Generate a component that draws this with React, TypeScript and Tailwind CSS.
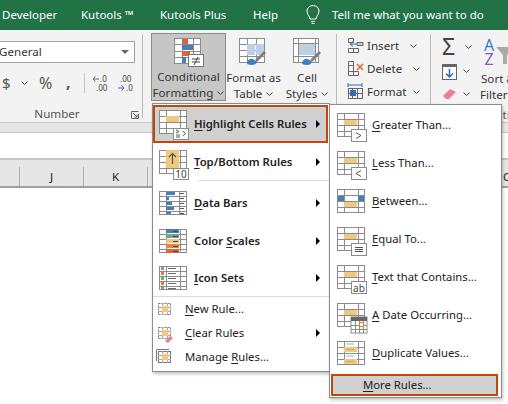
import type { ReactNode } from 'react';

const GRAY = '#8c8c8c';
const AMBER = '#f0c97f';
const BLUE = '#4a7fb5';
const RED = '#e0623f';

function Grid({ x = 1, y = 1, w = 28, h = 24, cols = [7, 21], rows = [6, 12, 18] }: { x?: number; y?: number; w?: number; h?: number; cols?: number[]; rows?: number[] }) {
  return (
    <g stroke={GRAY} fill="none" strokeWidth="1">
      <rect x={x + 0.5} y={y + 0.5} width={w - 1} height={h - 1} fill="#fff" />
      {cols.map((c) => <path key={c} d={`M${x + c + 0.5} ${y}v${h}`} />)}
      {rows.map((r) => <path key={r} d={`M${x} ${y + r + 0.5}h${w}`} />)}
    </g>
  );
}

function Badge({ children, x = 15, y = 17, w = 16, h = 13 }: { children?: ReactNode; x?: number; y?: number; w?: number; h?: number }) {
  return (
    <g>
      <rect x={x + 0.5} y={y + 0.5} width={w - 1} height={h - 1} fill="#fff" stroke={GRAY} />
      {children}
    </g>
  );
}

function Icon({ children, size = 32 }: { children: ReactNode; size?: number }) {
  return <svg width={size} height={size} viewBox={`0 0 ${size} ${size}`} className="block shrink-0">{children}</svg>;
}

const AmberCell = ({ y = 8, h = 5 }: { y?: number; h?: number }) => <rect x="8" y={y} width="13" height={h} fill={AMBER} />;

const icons: Record<string, ReactNode> = {
  highlight: (
    <Icon><Grid /><AmberCell y={7} h={6} /><Badge y={19} h={12}><path d="M18 21l3 1.500-3 1.500M18 26h4M18 28h4M24.500 22l3 2.500-3 2.500" stroke="#555" fill="none" /></Badge></Icon>
  ),
  top: (
    <Icon><Grid /><rect x="8" y="1" width="13" height="18" fill={AMBER} /><path d="M14.500 15V5M11 8l3.500-3.500L18 8" stroke="#555" fill="none" strokeWidth="1.200" /><Badge y={19} h={12}><text x="23" y="29" textAnchor="middle" fontSize="10" fill="#444" fontFamily="Noto Sans">10</text></Badge></Icon>
  ),
  bars: (
    <Icon>
      <Grid cols={[7, 20]} rows={[5, 10, 15, 20]} />
      <rect x="8" y="2" width="9" height="3" fill={BLUE} /><rect x="8" y="7" width="3" height="3" fill={BLUE} /><rect x="8" y="12" width="6" height="3" fill={BLUE} /><rect x="8" y="17" width="8" height="3" fill={BLUE} /><rect x="8" y="22" width="5" height="2" fill={BLUE} />
      <path d="M22 3.500h4M22 8.500h4M22 13.500h4M22 18.500h4M22 23.500h4" stroke="#555" />
    </Icon>
  ),
  scales: (
    <Icon>
      <Grid cols={[7, 21]} rows={[5, 10, 15, 20]} />
      <rect x="8" y="1" width="13" height="4" fill={BLUE} /><rect x="8" y="6" width="13" height="4" fill="#6fa58d" /><rect x="8" y="11" width="13" height="4" fill={AMBER} /><rect x="8" y="16" width="13" height="4" fill="#e8863f" /><rect x="8" y="21" width="13" height="4" fill={RED} />
      <path d="M15 3.500h5M15 8.500h5M15 13.500h5M15 18.500h5M15 23.500h5" stroke="#444" />
    </Icon>
  ),
  sets: (
    <Icon>
      <Grid cols={[7, 21]} rows={[5, 10, 15, 20]} />
      <rect x="3" y="2" width="3" height="3" fill="#6fa58d" /><rect x="3" y="7" width="3" height="3" fill="#ea7d2c" /><rect x="3" y="12" width="3" height="3" fill="#6fa58d" /><rect x="3" y="17" width="3" height="3" fill="#ea7d2c" /><rect x="3" y="22" width="3" height="2" fill="#6fa58d" />
      <path d="M10 3.500h8M10 8.500h8M10 13.500h8M10 18.500h8M10 23.500h8" stroke="#666" />
    </Icon>
  ),
  greater: (
    <Icon><Grid /><AmberCell /><Badge><path d="M20 20.500l5 3-5 3" stroke="#555" fill="none" /></Badge></Icon>
  ),
  less: (
    <Icon><Grid /><AmberCell /><Badge><path d="M25 20.500l-5 3 5 3" stroke="#555" fill="none" /></Badge></Icon>
  ),
  between: (
    <Icon><Grid /><rect x="2" y="8" width="6" height="5" fill={BLUE} /><rect x="22" y="8" width="6" height="5" fill={BLUE} /><rect x="8" y="14" width="13" height="5" fill={AMBER} /></Icon>
  ),
  equal: (
    <Icon><Grid /><AmberCell /><Badge><path d="M19 21.500h8M19 23.500h8M19 25.500h8" stroke="#555" /></Badge></Icon>
  ),
  text: (
    <Icon><Grid /><AmberCell /><Badge><text x="23" y="28" textAnchor="middle" fontSize="10" fill="#444" fontFamily="Noto Sans">ab</text></Badge></Icon>
  ),
  date: (
    <Icon>
      <Grid /><AmberCell />
      <rect x="15" y="15" width="16" height="16" fill="#fff" stroke={GRAY} />
      <rect x="15" y="15" width="16" height="4" fill="#666" />
      <path d="M15 23.500h16M15 27.500h16M19.500 19v12M23.500 19v12M27.500 19v12" stroke={GRAY} />
      <rect x="23.500" y="20.500" width="4" height="4" fill="#fff" stroke="#e8792c" />
    </Icon>
  ),
  dup: (
    <Icon>
      <Grid cols={[7, 21]} />
      <path d="M10 4h8" stroke="#aaa" /><rect x="8" y="7" width="13" height="5" fill={AMBER} /><path d="M10 9.500h8" stroke="#aaa" /><path d="M10 16h8" stroke="#aaa" /><rect x="8" y="19" width="13" height="5" fill={AMBER} /><path d="M10 21.500h8" stroke="#aaa" />
    </Icon>
  ),
};

function SmallGrid({ kind }: { kind: 'new' | 'clear' | 'manage' }) {
  return (
    <svg width="18" height="18" viewBox="0 0 18 18" className="block shrink-0 mt-[1px]">
      {kind === 'manage' && <path d="M0.500 12V0.500H13" stroke="#777" fill="none" />}
      <rect x="2.500" y="2.500" width="12" height="11" fill="#fff" stroke="#777" strokeDasharray={kind === 'manage' ? undefined : '2 1'} />
      <path d="M2 6.500h13M2 10.500h13M6.500 2v12M11.500 2v12" stroke="#aaa" />
      <rect x="6" y="5" width="6" height="6" fill={AMBER} />
      {kind === 'clear' && <path d="M9 16l5-5 3 2-5 5z" fill="#ea7f92" />}
    </svg>
  );
}

function Arrow() {
  return <span className="ml-auto w-0 h-0 border-y-[4px] border-y-transparent border-l-[4px] border-l-black" />;
}

function Label({ pre = '', u, post, bold }: { pre?: string; u: string; post: string; bold?: boolean }) {
  return (
    <span className={`text-[11.3px] whitespace-nowrap text-[#222] ${bold ? 'font-semibold' : ''}`}>
      {pre}<span className="underline underline-offset-2">{u}</span>{post}
    </span>
  );
}

function MainRow({ icon, u, pre, post, active, short }: { icon: string; u: string; pre?: string; post: string; active?: boolean; short?: boolean }) {
  return (
    <div className={`flex items-center ${short ? 'h-[36px]' : 'h-[38px]'} ${active ? 'mr-[1px] pl-[3px] pr-[6px] bg-[#d0d0d0] border-2 border-[#c4470a]' : 'pl-[5px] pr-[9px]'}`}>
      <div className={`w-[36px] h-[32px] ${active ? 'pt-[1px]' : 'pt-[3px]'}`}>{icons[icon]}</div>
      <Label pre={pre} u={u} post={post} bold />
      <Arrow />
    </div>
  );
}

function SmallRow({ kind, u, pre, post, arrow }: { kind: 'new' | 'clear' | 'manage'; u: string; pre?: string; post: string; arrow?: boolean }) {
  return (
    <div className="h-[24px] flex items-center pl-[3px] pr-[9px]">
      <div className="w-[29px]"><SmallGrid kind={kind} /></div>
      <Label pre={pre} u={u} post={post} />
      {arrow && <Arrow />}
    </div>
  );
}

function SubRow({ icon, u, pre, post }: { icon: string; u: string; pre?: string; post: string }) {
  return (
    <div className="h-[38px] flex items-center pl-[6px]">
      <div className="w-[36px] h-[32px] -mt-[1px] pt-[3px]">{icons[icon]}</div>
      <Label pre={pre} u={u} post={post} />
    </div>
  );
}

function Chevron() {
  return (
    <svg width="7" height="5" viewBox="0 0 7 5" className="inline-block ml-[4px]">
      <path d="M0.500 0.500L3.500 3.500 6.500 0.500" fill="none" stroke="#444" />
    </svg>
  );
}

function Brush({ x, y }: { x: number; y: number }) {
  return (
    <g transform={`translate(${x} ${y})`}>
      <path d="M8 10L17 1l2 2-9 9z" fill="#7f7f7f" />
      <path d="M0 14c0-4 3-6 6-5l4 3c-1 3-5 4-10 2z" fill="#3f7fbf" />
    </g>
  );
}

function BigButton({ icon, line1, line2, className = '' }: { icon: ReactNode; line1: string; line2: string; className?: string }) {
  return (
    <div className={`h-[68px] shrink-0 flex flex-col items-center text-[11.6px] leading-[16px] text-[#333] ${className}`}>
      <div className="h-[37px] pt-[3px]">{icon}</div>
      <div className="whitespace-nowrap">{line1}</div>
      <div className="whitespace-nowrap">{line2}<Chevron /></div>
    </div>
  );
}

function CellRow({ icon, label, gap }: { icon: ReactNode; label: string; gap: string }) {
  return (
    <div className="h-[23px] flex items-center text-[11.6px] text-[#333]">
      <div className="w-[20px] shrink-0">{icon}</div>
      <span>{label}</span>
      <span className={gap}><Chevron /></span>
    </div>
  );
}

function Divider() {
  return <div className="w-px h-[84px] bg-[#b9b9b9] shrink-0" />;
}

export default function App() {
  return (
    <div className="relative w-[508px] h-[404px] overflow-hidden bg-white font-['Noto_Sans',sans-serif]">
      {/* Tab strip */}
      <div className="h-[30px] bg-[#217346] flex items-center text-[11.5px] text-white pl-[2px] whitespace-nowrap">
        <span className="w-[79px]">Developer</span>
        <span className="w-[79px]">Kutools ™</span>
        <span className="w-[93px]">Kutools Plus</span>
        <span className="w-[52px]">Help</span>
        <svg width="16" height="20" viewBox="0 0 16 20" fill="none" stroke="#fff" className="mr-[11px]">
          <path d="M5 14c0-3-3-4-3-8a6 5.500 0 0 1 12 0c0 4-3 5-3 8zM6 16.500h4M6.500 18.500h3" />
        </svg>
        <span>Tell me what you want to do</span>
      </div>

      {/* Ribbon */}
      <div className="relative h-[92px] bg-[#f3f3f3] flex pt-[4px] overflow-hidden">
        <div className="w-[142px] shrink-0 flex flex-col">
          <div className="mt-[7px] w-[135px] h-[22px] bg-white border border-[#a0a0a0] border-l-0 flex items-center text-[11.6px] text-[#333] pr-[5px]">
            <span className="-ml-[1px]">General</span>
            <span className="ml-auto w-0 h-0 border-x-[4px] border-x-transparent border-t-[4px] border-t-[#666]" />
          </div>
          <div className="h-[40px] flex items-center text-[#555] pl-[2px]">
            <span className="text-[15px] w-[15px]">$</span>
            <Chevron />
            <span className="text-[16px] ml-[11px] w-[27px]">%</span>
            <span className="text-[16px] font-bold w-[18px] -mt-[3px]">,</span>
            <div className="w-px h-[20px] bg-[#c6c6c6] mr-[7px]" />
            <div className="w-[26px] flex items-center text-[8px] leading-[9px] text-[#444]">
              <div className="flex flex-col">
                <div className="flex items-center gap-[1px]">
                  <svg width="7" height="6" viewBox="0 0 7 6" fill="none" stroke="#2f6fb0"><path d="M7 3H1M3.500 0.500L1 3l2.500 2.500" /></svg>
                  <span>.0</span>
                </div>
                <span className="pl-[4px]">.00</span>
              </div>
            </div>
            <div className="flex flex-col text-[8px] leading-[9px] text-[#444]">
              <span className="pl-[2px]">.00</span>
              <div className="flex items-center gap-[1px]">
                <svg width="7" height="6" viewBox="0 0 7 6" fill="none" stroke="#2f6fb0"><path d="M0 3h6M3.500 0.500L6 3 3.500 5.500" /></svg>
                <span>.0</span>
              </div>
            </div>
          </div>
          <div className="relative mt-[3px] flex justify-center text-[11.6px] text-[#555] h-[16px] leading-[16px] pr-[28px]">
            Number
            <svg width="8" height="8" viewBox="0 0 8 8" className="absolute right-[3px] top-[5px]" fill="none" stroke="#666">
              <path d="M0.500 7V0.500H7.500M0.500 7.500H7.500V3M2 2l4 4M6 3.500V6H3.500" />
            </svg>
          </div>
        </div>
        <Divider />
        <BigButton
          className="ml-[8px] w-[75px] bg-[#c6c6c6] border border-[#8c8c8c] -mt-[1px]"
          line1="Conditional"
          line2="Formatting"
          icon={
            <svg width="32" height="32" viewBox="0 0 32 32">
              <Grid x={1} y={1} w={27} h={26} cols={[8, 19]} rows={[6, 13, 19]} />
              <rect x="9" y="2" width="6" height="5" fill={RED} /><rect x="9" y="8" width="11" height="5" fill={BLUE} /><rect x="9" y="14" width="8" height="5" fill={RED} /><rect x="9" y="20" width="4" height="6" fill={BLUE} />
              <rect x="15.500" y="17.500" width="15" height="12" fill="#fff" stroke="#777" />
              <path d="M19 22h8M19 25h8M25 20l-4 8" stroke="#444" fill="none" />
            </svg>
          }
        />
        <BigButton
          className="w-[55px]"
          line1="Format as"
          line2="Table"
          icon={
            <svg width="32" height="32" viewBox="0 0 32 32">
              <Grid x={1} y={1} w={26} h={25} cols={[8, 17]} rows={[6, 12, 18]} />
              <rect x="9" y="7" width="8" height="11" fill="#bcd0e6" /><rect x="18" y="7" width="8" height="11" fill="#bcd0e6" />
              <Brush x={9} y={13} />
            </svg>
          }
        />
        <BigButton
          className="w-[52px]"
          line1="Cell"
          line2="Styles"
          icon={
            <svg width="32" height="32" viewBox="0 0 32 32">
              <Grid x={2} y={1} w={26} h={25} cols={[5, 22]} rows={[5, 18]} />
              <rect x="8" y="7" width="16" height="11" fill="#bcd0e6" />
              <Brush x={11} y={13} />
            </svg>
          }
        />
        <div className="ml-[3px] shrink-0"><Divider /></div>
        <div className="ml-[10px] w-[83px] shrink-0">
          <CellRow
            label="Insert"
            gap="ml-[7px]"
            icon={
              <svg width="17" height="17" viewBox="0 0 17 17" fill="none" stroke="#666">
                <path d="M1.500 1.500h5v4h-5zM1.500 11.500h5v4h-5zM6.500 11.500h5v4h-5z" />
                <path d="M10 5.500h6v3h-6z" fill="#ccc" /><path d="M10 7H3M6 4.500L3 7l3 2.500" stroke="#2f6fb0" />
              </svg>
            }
          />
          <CellRow
            label="Delete"
            gap="ml-[7px]"
            icon={
              <svg width="17" height="17" viewBox="0 0 17 17" fill="none" stroke="#666">
                <path d="M1.500 1.500h5v4h-5zM1.500 11.500h5v4h-5zM6.500 11.500h5v4h-5zM1.500 5.500h5v6h-5z" />
                <path d="M10 4l6 6M16 4l-6 6" stroke="#e0623f" strokeWidth="1.500" />
              </svg>
            }
          />
          <CellRow
            label="Format"
            gap="ml-[3px]"
            icon={
              <svg width="17" height="17" viewBox="0 0 17 17" fill="none" stroke="#666">
                <path d="M1 2h14M1 0v4M15 0v4" stroke="#2f6fb0" />
                <rect x="1.500" y="5.500" width="14" height="10" /><path d="M1 10.500h15M5.500 5v11M10.500 5v11" />
                <rect x="3" y="7" width="6" height="6" fill="#2f6fb0" stroke="none" />
              </svg>
            }
          />
        </div>
        <Divider />
        <div className="ml-[11px] w-[37px] shrink-0">
          <div className="h-[26px] flex items-center">
            <span className="text-[23px] leading-[20px] text-[#444] w-[19px] -mt-[3px]">Σ</span><Chevron />
          </div>
          <div className="h-[23px] flex items-center">
            <svg width="15" height="16" viewBox="0 0 15 16" className="mr-[2px]">
              <rect x="0.500" y="0.500" width="14" height="15" fill="#fff" stroke="#666" /><rect x="0" y="0" width="15" height="3" fill="#666" />
              <path d="M7.500 5v8M4 9.500l3.500 3.500L11 9.500" stroke="#2f6fb0" strokeWidth="1.500" fill="none" />
            </svg>
            <Chevron />
          </div>
          <div className="h-[22px] flex items-center">
            <svg width="15" height="14" viewBox="0 0 15 14" className="mr-[2px]">
              <path d="M1 9l7-7 6 3-7 7H4z" fill="#ea7f92" />
            </svg>
            <Chevron />
          </div>
        </div>
        <div className="w-[38px] shrink-0 flex flex-col text-[11.6px] leading-[16px] text-[#333] h-[68px]">
          <svg width="34" height="37" viewBox="0 0 34 37" className="shrink-0 ml-[2px]">
            <text x="8" y="17" textAnchor="middle" fontSize="16" fontFamily="Noto Sans" fill="#2f7fd0">A</text>
            <text x="8" y="31" textAnchor="middle" fontSize="16" fontFamily="Noto Sans" fill="#8a5ab5">Z</text>
            <path d="M15 13h18l-7 8v9h-4v-9z" fill="#aaa" />
          </svg>
          <span className="whitespace-nowrap pl-[2px]">Sort &amp;</span>
          <span className="whitespace-nowrap pl-[1px]">Filter</span>
        </div>
        <span className="absolute left-[486px] top-[77px] text-[11.6px] leading-[16px] text-[#555]">Editing</span>
      </div>

      {/* Formula bar */}
      <div className="h-[11px] bg-[#e6e6e6] border-y border-y-[#c6c6c6]" />
      <div className="h-[25px] bg-white" />
      <div className="h-[30px] bg-[#e6e6e6] border-t-2 border-t-[#c6c6c6] border-b-2 border-b-[#9f9f9f] flex items-end text-[11.6px] text-[#222]">
        <div className="w-[20px] h-[19px] border-r border-r-[#b0b0b0] shrink-0" />
        <div className="w-[64px] h-[19px] border-r border-r-[#b0b0b0] flex items-center justify-center shrink-0">J</div>
        <div className="w-[64px] h-[19px] border-r border-r-[#b0b0b0] flex items-center justify-center shrink-0">K</div>
        <div className="ml-[355px] h-[19px] leading-[19px]">Q</div>
      </div>

      {/* Main dropdown */}
      <div className="absolute left-[152px] top-[103px] w-[178px] h-[269px] bg-white border border-[#8c8c8c] shadow-[1px_2px_3px_rgba(0,0,0,0.25)] pt-[1px]">
        <MainRow icon="highlight" u="H" post="ighlight Cells Rules" active />
        <MainRow icon="top" u="T" post="op/Bottom Rules" />
        <div className="ml-[45px] h-px bg-[#dcdcdc] -mt-px mb-[3px]" />
        <MainRow icon="bars" u="D" post="ata Bars" />
        <MainRow icon="scales" pre="Color " u="S" post="cales" />
        <MainRow icon="sets" u="I" post="con Sets" short />
        <div className="h-px bg-[#dcdcdc]" />
        <SmallRow kind="new" u="N" post="ew Rule..." />
        <SmallRow kind="clear" u="C" post="lear Rules" arrow />
        <SmallRow kind="manage" pre="Manage " u="R" post="ules..." />
      </div>

      {/* Submenu */}
      <div className="absolute left-[329px] top-[104px] w-[173px] h-[294px] bg-white border border-[#8c8c8c] shadow-[1px_2px_3px_rgba(0,0,0,0.25)] pt-[1px]">
        <SubRow icon="greater" u="G" post="reater Than..." />
        <SubRow icon="less" u="L" post="ess Than..." />
        <SubRow icon="between" u="B" post="etween..." />
        <SubRow icon="equal" u="E" post="qual To..." />
        <SubRow icon="text" u="T" post="ext that Contains..." />
        <SubRow icon="date" u="A" post=" Date Occurring..." />
        <SubRow icon="dup" u="D" post="uplicate Values..." />
        <div className="ml-[1px] mr-[3px] mt-[2px] h-[22px] bg-[#d0d0d0] border-2 border-[#c4470a] flex items-center pl-[30px]">
          <Label u="M" post="ore Rules..." />
        </div>
      </div>
    </div>
  );
}
